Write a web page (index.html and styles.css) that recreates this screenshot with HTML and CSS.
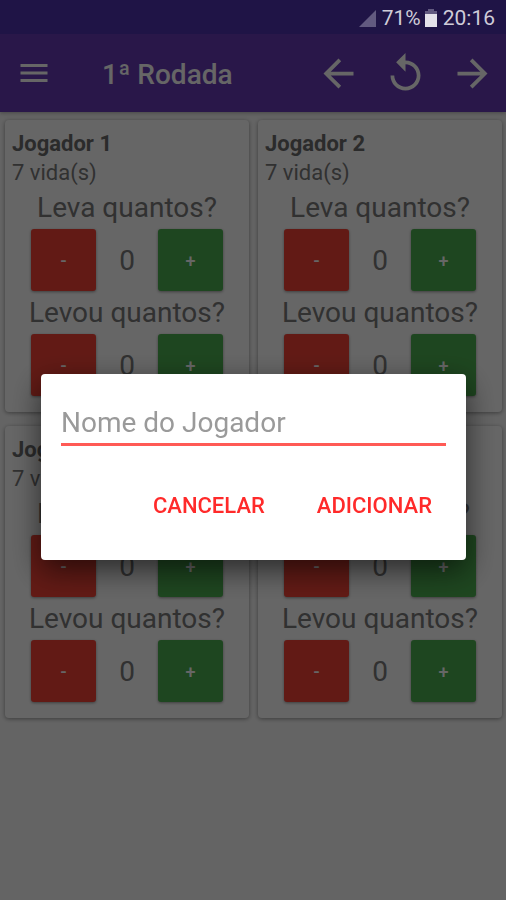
FILE: index.html
```html
<!DOCTYPE html>
<html lang="pt-BR">
<head>
    <meta charset="UTF-8">
    <meta name="viewport" content="width=device-width, initial-scale=1.0">
    <title>1ª Rodada</title>
    <link rel="stylesheet" href="styles.css">
</head>
<body>

    <!-- Status bar -->
    <div class="status-bar">
        <svg class="signal" viewBox="0 0 17 17"><path d="M17 0v17H0z"/></svg>
        <span class="battery-level">71%</span>
        <svg class="battery" viewBox="0 0 12 18">
            <path class="battery-empty" d="M3 0h6v2h3v4H0V2h3z"/>
            <path d="M0 5h12v13H0z"/>
        </svg>
        <span class="clock">20:16</span>
    </div>

    <!-- Toolbar -->
    <header class="toolbar">
        <button class="icon-button menu-button" aria-label="Menu">
            <svg viewBox="0 0 24 24"><path d="M3 18h18v-2H3v2zm0-5h18v-2H3v2zm0-7v2h18V6H3z"/></svg>
        </button>
        <h1>1ª Rodada</h1>
        <button class="icon-button" aria-label="Rodada anterior">
            <svg viewBox="0 0 24 24"><path d="M20 11H7.83l5.59-5.59L12 4l-8 8 8 8 1.41-1.41L7.83 13H20v-2z"/></svg>
        </button>
        <button class="icon-button" aria-label="Reiniciar">
            <svg viewBox="0 0 24 24"><path d="M12 5V1L7 6l5 5V7c3.31 0 6 2.69 6 6s-2.69 6-6 6-6-2.69-6-6H4c0 4.42 3.58 8 8 8s8-3.58 8-8-3.58-8-8-8z"/></svg>
        </button>
        <button class="icon-button" aria-label="Próxima rodada">
            <svg viewBox="0 0 24 24"><path d="M12 4l-1.41 1.41L16.17 11H4v2h12.17l-5.58 5.59L12 20l8-8z"/></svg>
        </button>
    </header>

    <!-- Players -->
    <main class="players">
        <section class="card">
            <h2>Jogador 1</h2>
            <p class="lives">7 vida(s)</p>
            <p class="question">Leva quantos?</p>
            <div class="counter">
                <button class="minus">-</button>
                <span class="count">0</span>
                <button class="plus">+</button>
            </div>
            <p class="question">Levou quantos?</p>
            <div class="counter">
                <button class="minus">-</button>
                <span class="count">0</span>
                <button class="plus">+</button>
            </div>
        </section>
        <section class="card">
            <h2>Jogador 2</h2>
            <p class="lives">7 vida(s)</p>
            <p class="question">Leva quantos?</p>
            <div class="counter">
                <button class="minus">-</button>
                <span class="count">0</span>
                <button class="plus">+</button>
            </div>
            <p class="question">Levou quantos?</p>
            <div class="counter">
                <button class="minus">-</button>
                <span class="count">0</span>
                <button class="plus">+</button>
            </div>
        </section>
        <section class="card">
            <h2>Jogador 3</h2>
            <p class="lives">7 vida(s)</p>
            <p class="question">Leva quantos?</p>
            <div class="counter">
                <button class="minus">-</button>
                <span class="count">0</span>
                <button class="plus">+</button>
            </div>
            <p class="question">Levou quantos?</p>
            <div class="counter">
                <button class="minus">-</button>
                <span class="count">0</span>
                <button class="plus">+</button>
            </div>
        </section>
        <section class="card">
            <h2>Jogador 4</h2>
            <p class="lives">7 vida(s)</p>
            <p class="question">Leva quantos?</p>
            <div class="counter">
                <button class="minus">-</button>
                <span class="count">0</span>
                <button class="plus">+</button>
            </div>
            <p class="question">Levou quantos?</p>
            <div class="counter">
                <button class="minus">-</button>
                <span class="count">0</span>
                <button class="plus">+</button>
            </div>
        </section>
    </main>

    <!-- New player dialog -->
    <div class="overlay">
        <form class="dialog" role="dialog" aria-label="Novo jogador">
            <input type="text" placeholder="Nome do Jogador" aria-label="Nome do Jogador">
            <div class="dialog-actions">
                <button type="button">CANCELAR</button>
                <button type="button">ADICIONAR</button>
            </div>
        </form>
    </div>

</body>
</html>
```
FILE: styles.css
```css
* {
    box-sizing: border-box;
}

body {
    margin: 0;
    min-height: 100vh;
    font-family: Roboto, "Liberation Sans", sans-serif;
    background-color: #fafafa;
    color: #7a7a7a;
}

h1, h2, p {
    margin: 0;
}

button {
    padding: 0;
    border: none;
    font-family: inherit;
    cursor: pointer;
}

/* Status bar, stays above the overlay */
.status-bar {
    position: relative;
    z-index: 20;
    display: flex;
    align-items: center;
    justify-content: flex-end;
    height: 34px;
    padding: 2px 11px 0 0;
    background-color: #1f1446;
    color: #cfccd8;
    font-size: 21px;
}

.status-bar svg {
    fill: #e4e2ea;
}

.status-bar .signal {
    width: 17px;
    height: 17px;
    margin-right: 6px;
    fill: #625a80;
}

.battery {
    width: 12px;
    height: 18px;
    margin: 0 6px 0 4px;
}

.status-bar .battery-empty {
    fill: #625a80;
}

/* Toolbar */
.toolbar {
    display: flex;
    align-items: center;
    gap: 22px;
    height: 78px;
    padding: 0 11px 0 16px;
    background-color: #673ab7;
    box-shadow: 0 1px 4px rgba(0, 0, 0, 0.3);
}

.toolbar h1 {
    flex: 1;
    padding: 2px 0 0 28px;
    color: #fff;
    font-size: 28px;
    font-weight: 500;
}

.icon-button {
    width: 45px;
    height: 45px;
    background: none;
}

.icon-button svg {
    display: block;
    width: 100%;
    fill: #fff;
}

.menu-button {
    width: 36px;
    height: 36px;
}

/* Player cards */
.players {
    display: grid;
    grid-template-columns: 1fr 1fr;
    gap: 14px 9px;
    padding: 8px 4px 8px 5px;
}

.card {
    padding: 9px 7px 16px;
    border-radius: 4px;
    background-color: #fff;
    box-shadow: 0 1px 4px rgba(0, 0, 0, 0.4);
}

.card h2 {
    color: #6c6c6c;
    font-size: 22px;
    font-weight: 700;
    line-height: 29px;
}

.lives {
    font-size: 22px;
    line-height: 29px;
}

.question {
    padding-top: 1px;
    font-size: 28px;
    line-height: 42px;
    text-align: center;
}

.counter {
    display: flex;
    align-items: center;
    justify-content: center;
}

.counter button {
    width: 65px;
    height: 62px;
    border-radius: 3px;
    color: #fff;
    font-size: 18px;
    font-weight: 500;
    box-shadow: 0 1px 3px rgba(0, 0, 0, 0.4);
}

.counter .minus {
    background-color: #f44336;
}

.counter .plus {
    background-color: #4caf50;
}

.count {
    width: 62px;
    font-size: 28px;
    text-align: center;
}

.lives + .question {
    padding-top: 0;
}

/* Dialog */
.overlay {
    position: fixed;
    inset: 0;
    z-index: 10;
    display: flex;
    align-items: center;
    justify-content: center;
    padding: 34px 40px 0 41px;
    background-color: rgba(0, 0, 0, 0.6);
}

.dialog {
    width: 100%;
    padding: 28px 20px 32px;
    border-radius: 4px;
    background-color: #fff;
    box-shadow: 0 10px 30px rgba(0, 0, 0, 0.6);
}

.dialog input {
    display: block;
    width: 100%;
    height: 44px;
    padding: 0;
    border: none;
    border-bottom: 3px solid #ff5a55;
    outline: none;
    background: none;
    font-family: inherit;
    font-size: 28px;
}

.dialog input::placeholder {
    color: #9a9a9a;
    opacity: 1;
}

.dialog-actions {
    display: flex;
    justify-content: flex-end;
    gap: 52px;
    padding: 36px 14px 0 0;
}

.dialog-actions button {
    height: 46px;
    background: none;
    color: #ff2a2a;
    font-size: 22px;
    font-weight: 500;
}
```
